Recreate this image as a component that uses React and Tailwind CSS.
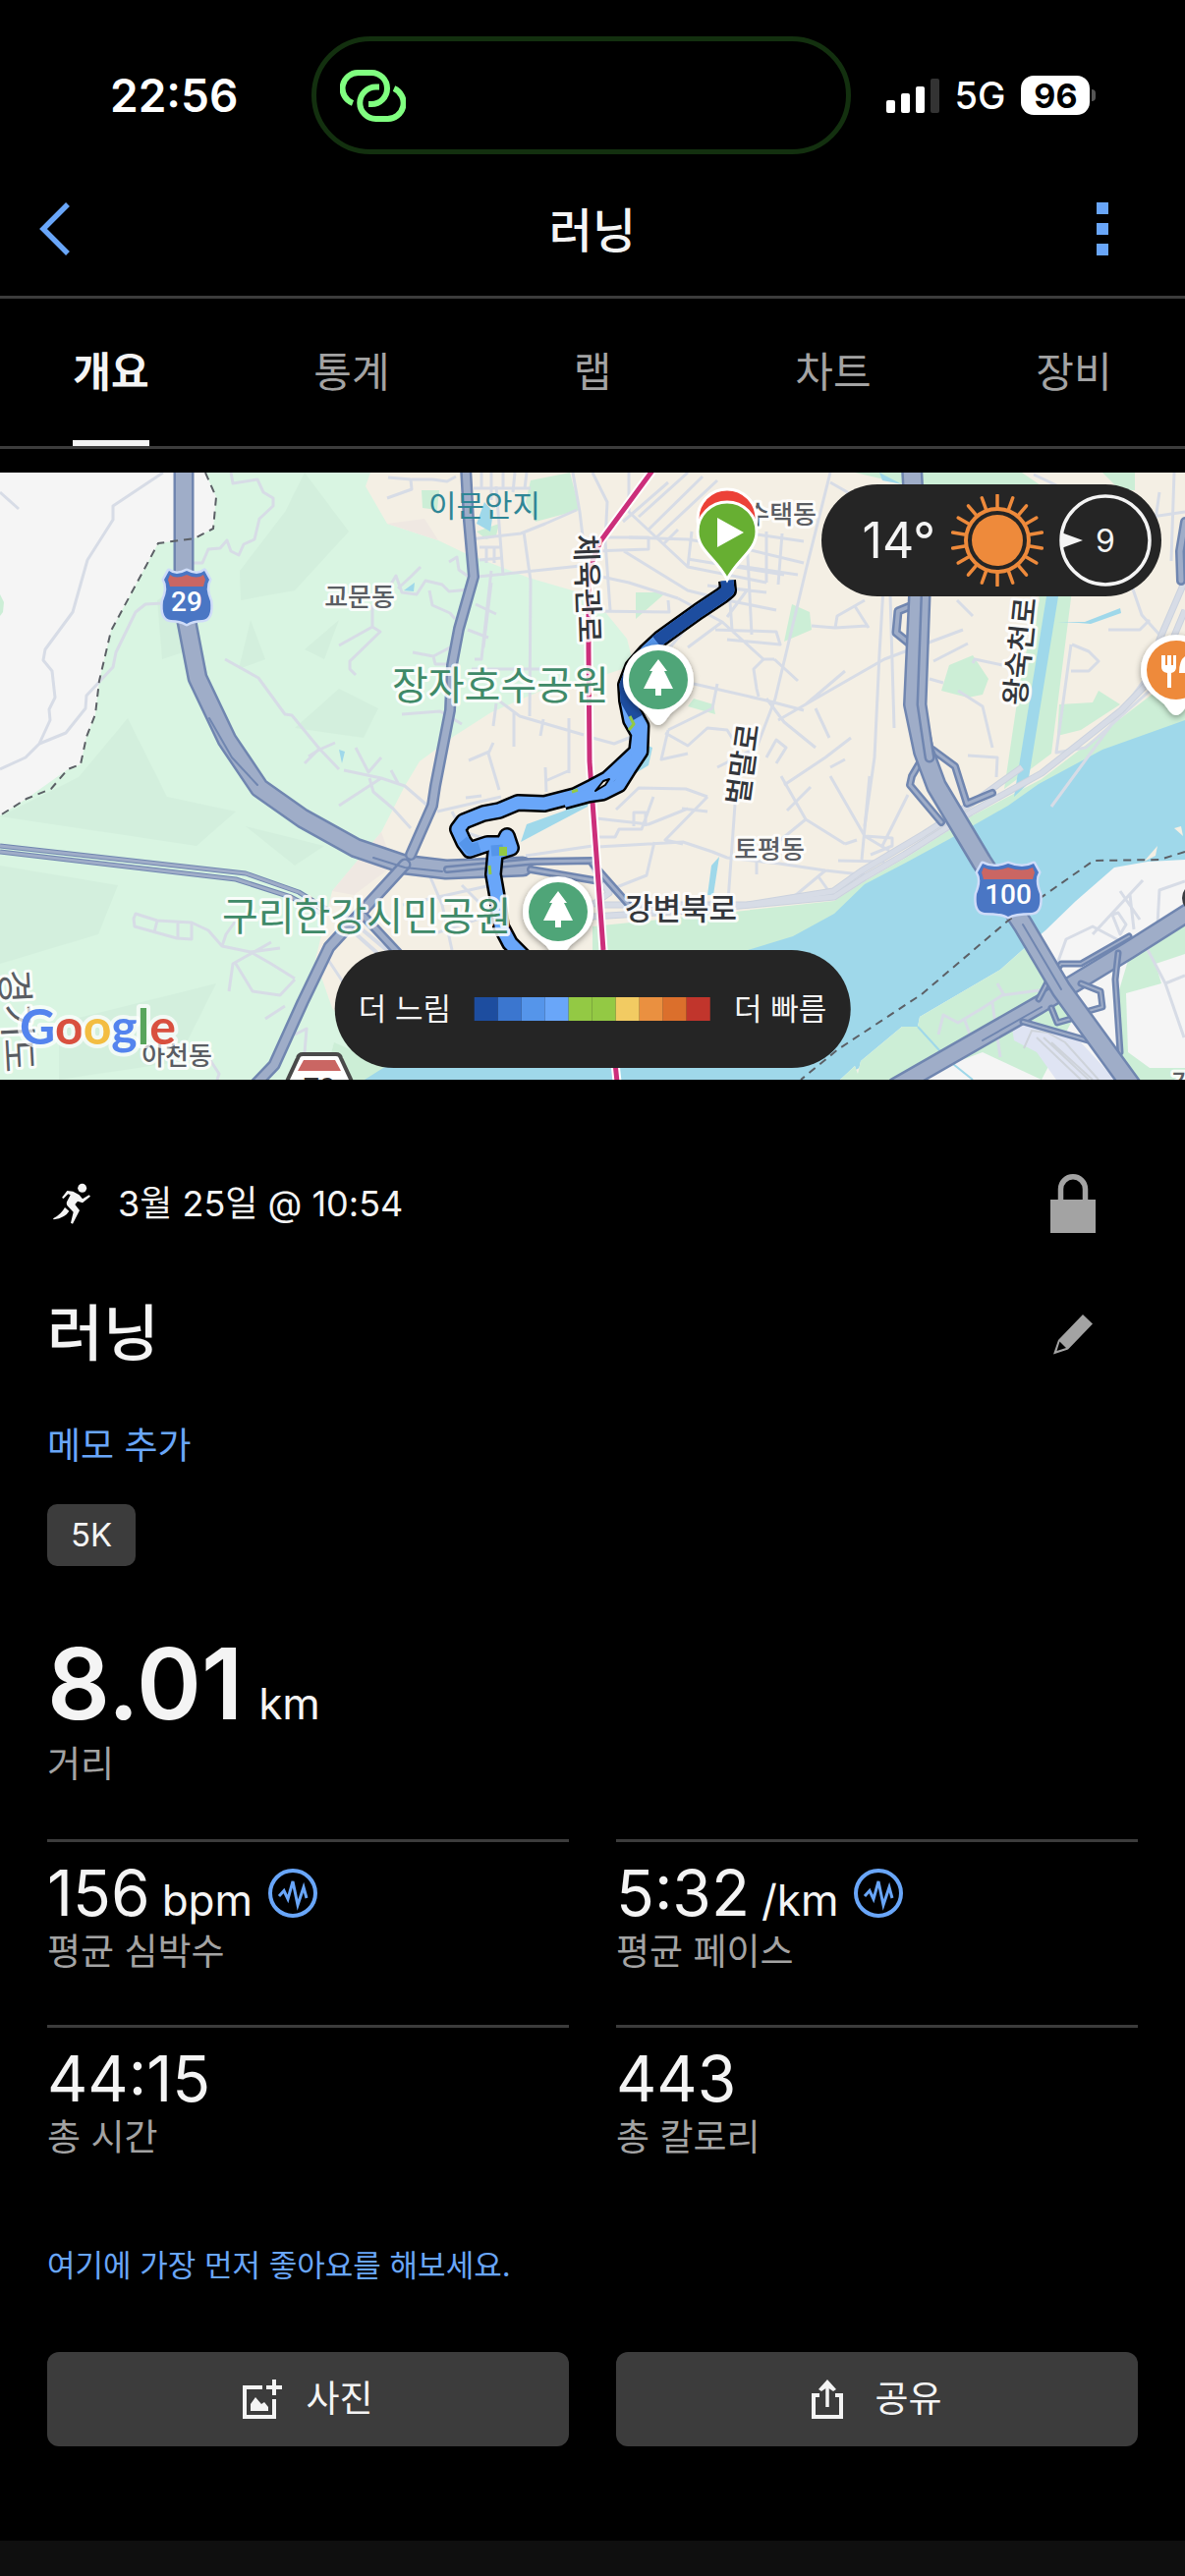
/**
 * ── App.jsx ───────────────────────────────────────────────────────────────
 * Activity overview screen: status bar, tabs, route map and summary stats.
 */

const TABS = ['개요', '통계', '랩', '차트', '장비']

const PACE_COLORS = [
  'bg-[#1d4d9f]',
  'bg-[#3b76cf]',
  'bg-[#5595ea]',
  'bg-[#69a6f9]',
  'bg-[#93c944]',
  'bg-[#93c944]',
  'bg-[#f2cb62]',
  'bg-[#ea9040]',
  'bg-[#db6f2c]',
  'bg-[#c1352c]',
]

const STATS = [
  { label: '평균 심박수', value: '156', unit: 'bpm', badge: true },
  { label: '평균 페이스', value: '5:32', unit: '/km', badge: true },
  { label: '총 시간', value: '44:15' },
  { label: '총 칼로리', value: '443' },
]

/* ── Map geometry ──────────────────────────────────────────────────────── */

const MINOR_ROADS = [
  // west hills
  'M166 0 L115 34 L115 48 L89 89 L74 142 L46 180 L44 191 L53 202 L56 229 L50 241 L51 252 L40 276 L26 290 L0 302',
  'M40 276 L67 265 L87 240 L88 227 L115 198 L118 183 L138 142 L148 134 L165 133',
  'M0 20 L19 37',
  'M235 0 L237 11 L262 7 L268 20 L278 26 L278 34 L264 47 L259 68 L248 73 L243 84 L235 80 L231 69 L224 77 L212 78 L206 92 L197 92',
  'M229 190 L263 209 L290 246 L297 247 L325 281 L345 302 M325 281 L310 296 M341 275 L325 282 L314 289 M362 280 L375 305 L388 290 M398 303 L405 316',
  'M350 303 L388 311 L412 319 L434 338 M388 311 L345 339 M376 311 L380 325 L400 342 L418 362',
  'M379 135 L379 157 L345 176 M379 157 L387 162 L356 192 L356 200 L362 206',
  'M394 120 L403 105 L409 122 L424 124 L433 110 L450 114 L457 121 L478 119 M405 118 L418 106 L428 96',
  'M457 91 L465 86 L467 99 L477 106 M437 120 L440 135 L458 143 L463 149',
  'M420 183 L441 187 L443 195 L455 195 M441 187 L458 178 M409 246 L448 243 L470 256',
  'M136 454 L137 462 L180 474 L195 475 L195 458 L160 456 L138 449 Z M160 456 L157 468 M181 458 L181 474',
  'M195 458 L212 466 L226 482 L255 488 L276 500 L300 515 M226 482 L230 470 L240 456 M255 488 L285 484 M240 500 L257 528 L285 532 L300 516 M233 528 L237 500 L276 478 M270 556 L290 543',
  'M300 572 L312 566 L310 590 M210 592 L223 612 L221 618 M330 490 L350 520',
  // city centre
  'M395 5 L418 7 L419 17 L394 26 M419 7 L440 7 L455 9 L464 4',
  'M482 16 L540 16 M490 0 L490 16 M500 0 L500 28 M512 0 L512 16 M524 0 L522 20 M536 0 L534 16',
  'M478 68 L530 62 L555 52 L587 38 M486 106 L600 94 M505 14 L512 105 M583 0 L590 40 L596 90 M533 60 L540 110 L539 248',
  'M488 89 L511 87 M488 76 L511 76 M495 76 L495 92 M503 76 L503 92 M483 190 L490 190 L500 100 M500 112 L492 178 M476 160 L497 168 M484 134 L505 144 M480 200 L580 200',
  'M505 230 L529 248 L594 267 M523 244 L523 279 M579 250 L579 306 M553 251 L550 268 M505 235 L502 258 M502 275 L497 286 L508 323 M477 293 L498 284 M555 314 L580 303 M555 300 L556 325',
  'M603 0 L618 30 L616 70 L621 140 M603 80 L660 78 L660 66 L603 66 M635 80 L700 120 L740 130 L790 140',
  'M603 104 L640 112 L690 128 M680 130 L681 142 L603 141',
  'M640 0 L640 40 L700 96 L780 112 M650 45 L700 0 M660 58 L715 4 M668 66 L730 8 M676 72 L690 58 M634 50 L680 10 M700 96 L704 60',
  'M640 66 L700 68 L760 78 L818 92 M740 90 L745 160 M760 66 L765 165 M780 60 L780 112 M752 95 L812 104 M750 60 L818 70 M796 62 L792 114 M720 115 L780 122 M700 88 L798 104',
  'M845 0 L820 100 L789 230 L770 280 L730 300 M845 10 L880 30 L905 40',
  'M690 128 L735 152 L777 190 L788 190 M650 215 L710 145 M735 152 L700 178 M728 160 L790 162 L794 175 L740 170 M740 147 L760 120',
  'M706 215 L780 232 L818 242 M730 215 L725 240 L680 262 M777 190 L767 200 L770 220 L772 228',
  'M788 190 L812 212 M826 156 L850 158 L852 146 L880 130 M850 158 L882 156 M870 136 L884 158 M780 230 L798 254 L830 280',
  'M792 252 L865 210 L900 190 L980 160 M820 236 L860 202 M798 318 L840 290 L866 270 M780 290 L790 272 L800 280 L790 296',
  'M900 100 L895 185 L890 290 L880 360 M830 240 L844 270 M845 300 L860 292 M905 90 L910 260',
  'M974 130 L990 146 M950 192 L985 174 M946 210 L960 214 M990 194 L992 190 L1020 196 M975 222 L1000 238 L1010 280 M985 288 L1015 290 L1014 310',
  'M680 262 L673 292 L700 286 M677 265 L700 278 L720 260 L740 262 L748 275 M603 270 L625 276 L650 266',
  'M627 343 L650 321 L698 322 L720 330 M607 352 L660 358 L700 342 M645 360 L645 346 L657 346 L657 360 M603 371 L626 371 L630 363 L653 363 L665 330',
  'M608 381 L695 376 L725 386 L740 392 L793 398 L840 405 L884 410 M666 376 L658 410 L620 425 M720 330 L677 374 L695 378 M720 345 L694 342',
  'M750 310 L740 450 M795 309 L820 353 L860 378 M820 353 L782 384 M845 309 L880 370 L905 385 M885 309 L877 394 M860 378 L872 374 M924 328 L898 380 M880 370 L908 372 L908 380 L886 389 M853 395 L900 396 M770 395 L770 409 M840 405 L810 430 L785 436 M832 410 L842 424 M801 344 L825 320',
  'M1070 340 L1180 190 M1112 470 L1163 415 M1150 430 L1154 465 M1140 426 L1160 455 M1132 450 L1140 470 L1146 460 L1138 448 Z',
  'M1091 175 L1108 182 L1118 192 L1108 202 L1090 202 M1090 175 L1075 285 L1105 280 L1206 190 M1128 160 L1160 160 L1170 150 M1170 90 L1180 20 M1195 0 L1192 90 M1150 110 L1162 145 L1180 165',
  'M1052 2 L1090 20 L1120 14 M1072 60 L1206 40',
  'M1076 500 L1085 475 L1112 462 L1146 480 M1178 460 L1180 425 L1206 416 M1165 480 L1186 520 L1205 575 M1186 520 L1206 512',
  'M955 572 L960 552 L975 560 L1000 545 L1020 532 L1058 527 M1015 520 L1022 532 M981 555 L990 580 M1010 540 L1018 595',
  'M433 400 L450 440 L460 486 M410 440 L500 420 M440 470 L500 450 M470 420 L520 470 M535 390 L603 380 M445 345 L510 330 M474 331 L490 329 M460 345 L470 365 L500 375',
]

const MAIN_ROADS = [
  'M603 452 L700 446 L849 432 L880 412 L920 389 L988 346 L1060 306 L1141 242 L1180 202 L1206 140',
  'M610 440 L760 440 L848 426 L876 406 L940 368 L990 336 L1040 300',
  'M603 440 L620 428 L603 400',
  'M1206 110 L1180 170 L1170 210',
]

const HIGHWAYS = [
  { d: 'M187 -5 V110 L190 152 L201 209 L231 272 L264 321 L308 352 L362 382 L412 399 L454 404 L532 401', w: 21 },
  { d: 'M474 -5 L477 49 L482 106 L467 159 L460 196 L458 242 L443 319 L440 339 L418 389', w: 12 },
  { d: 'M412 399 L369 446 L335 483 L308 539 L279 603 L258 625', w: 13 },
  { d: 'M369 450 L408 492', w: 10 },
  { d: 'M455 404 L540 396 L603 395 M540 404 L610 416 M603 398 L640 440', w: 8 },
  { d: 'M936 132 L914 141 L912 163 L928 176', w: 9 },
  { d: 'M945 280 L928 309 L926 318 L958 356 M949 282 L972 299 L984 337 L1010 326', w: 8 },
  { d: 'M912 625 L1057 542 L1149 486 L1212 446', w: 20 },
  { d: 'M1138 489 L1135 516 L1140 590 M1041 559 L1107 578 M1057 536 L1068 515 L1080 500 L1100 500 L1149 472 M1100 520 L1120 528 L1122 544 L1108 548 M1070 545 L1076 560 L1090 556', w: 7 },
  { d: 'M1206 50 L1201 80 L1202 110', w: 10 },
  { d: 'M928 -5 L935 126 L930 236 L940 284 L953 319 L999 396 L1041 460 L1080 526 L1152 625', w: 22 },
  { d: 'M942 126 L938 236 L946 290', w: 11 },
]

const BORDER_LINES = [
  'M209 0 L220 25 L217 57 L198 67 L161 72 L113 161 L101 212 L97 246 L88 269 L82 297 L69 302 L52 322 L27 332 L0 349',
  'M1206 386 L1180 394 L1113 395 L1026 456 L938 531 L853 587 L815 618',
]

const ROUTE =
  'M740 110 L741 120 L735 125 L711 141 L690 156 L672 169 L658 182 L644 198 L637 216 L638 232 L642 252 L650 266 L648 284 L632 299 L618 312 L603 320 L585 329 L554 337 L527 336 L508 344 L492 347 L472 355 L466 363 L472 376 L478 384 L496 378 L512 378 L516 370 L520 382 L504 387 L502 409 L506 432 L510 462 L519 479 L540 500'

const ROUTE_RETURN = 'M643 240 L653 258 L652 284 L640 302 L630 318 L614 326 L600 328 L574 335'

/* ── Icons ─────────────────────────────────────────────────────────────── */

function LinkIcon() {
  return (
    <svg width="67" height="53" viewBox="0 0 67 53" fill="none" stroke="#80ff80" strokeWidth="6" aria-hidden="true">
      <path d="M13 34 A16 16 0 0 1 19 3 H32 A16 16 0 0 1 32 35 H29" />
      <path d="M40 17.500 H36.500 A16.200 16.200 0 0 0 36.500 50 H48 A16.200 16.200 0 0 0 55 19" />
    </svg>
  )
}

function SignalIcon() {
  return (
    <svg width="54" height="35" viewBox="0 0 54 35" fill="#fff" aria-hidden="true">
      <rect x="0" y="22" width="9" height="13" rx="2" />
      <rect x="15" y="15" width="9" height="20" rx="2" />
      <rect x="30" y="8" width="9" height="27" rx="2" />
      <rect x="45" y="0" width="9" height="35" rx="2" fill="#333" />
    </svg>
  )
}

function RunnerIcon() {
  return (
    <svg width="70" height="70" viewBox="0 0 210 210" fill="#f4f4f4" className="-ml-2" aria-hidden="true">
      <circle cx="131" cy="58" r="13.500" />
      <path d="M69 87 L85 66 L103 68 L122 79 L132 91 L152 79 L156 83 L132 103 L117 98 L109 108 L123 126 L102 167 L96 164 L104 131 L87 113 Q80 106 86 96 L95 79 L88 76 L74 90 Z" />
      <path d="M78 117 L91 128 Q80 148 44 154 L42 151 Q66 139 78 117 Z" />
    </svg>
  )
}

function LockIcon() {
  return (
    <svg width="46" height="60" viewBox="0 0 46 60" aria-hidden="true">
      <path d="M10.500 28 V15.300 a12.500 12.500 0 0 1 25 0 V28" fill="none" stroke="#a3a3a3" strokeWidth="5.500" />
      <rect y="26" width="46" height="34" fill="#a3a3a3" />
    </svg>
  )
}

function PencilIcon() {
  return (
    <svg width="40" height="41" viewBox="0 0 40 41" fill="#a3a3a3" fillRule="evenodd" aria-hidden="true">
      <path d="M30 0 L40 9.500 L15 35.500 L0 40.500 L5 26 Z M6.500 27.500 L13 34 L3.500 37 Z" />
    </svg>
  )
}

function PulseIcon() {
  return (
    <svg width="50" height="50" viewBox="0 0 50 50" fill="none" stroke="#69a6f9" aria-hidden="true">
      <circle cx="25" cy="25" r="23" strokeWidth="4" />
      <path d="M11 28 L16 22.500 L20 31 L25 13 L30 37 L36 19 L39 30" strokeWidth="3" />
    </svg>
  )
}

function AddPhotoIcon() {
  return (
    <svg width="40" height="40" viewBox="0 0 40 40" fill="none" stroke="#f4f4f4" strokeWidth="4" aria-hidden="true">
      <path d="M20 8 H2 V38 H32 V20 M24 8 H40 M32 0 V16" />
      <path d="M8 32 V25 L13 18 L19 25 L22 23 L26 28 V32 Z" fill="#f4f4f4" stroke="none" />
    </svg>
  )
}

function ShareIcon() {
  return (
    <svg width="32" height="40" viewBox="0 0 32 40" fill="none" stroke="#f4f4f4" strokeWidth="4" aria-hidden="true">
      <path d="M8 16 H2 V38 H30 V16 H24" />
      <path d="M16 28 V6" strokeWidth="3.500" />
      <path d="M16 0 L25 10 L22 12 L16 8 L10 12 L7 10 Z" fill="#f4f4f4" stroke="none" />
    </svg>
  )
}

function SunIcon() {
  const rays = Array.from({ length: 18 }, (_, i) => i * 20)
  return (
    <svg width="94" height="94" viewBox="-47 -47 94 94" fill="none" stroke="#ee8a3b" aria-hidden="true">
      <circle r="26" fill="#ee8a3b" stroke="none" />
      <circle r="32" strokeWidth="4" />
      {rays.map((deg) => (
        <path key={deg} d="M0 -34 V-46" strokeWidth="3.500" strokeLinecap="round" transform={`rotate(${deg})`} />
      ))}
    </svg>
  )
}

/* ── Map ───────────────────────────────────────────────────────────────── */

function Label({ x, y, size = 26, color = '#5a5d63', weight = 500, angle = 0, anchor = 'middle', children }) {
  return (
    <text
      transform={`translate(${x} ${y}) rotate(${angle})`}
      dy="0.36em"
      textAnchor={anchor}
      fontSize={size}
      fontWeight={weight}
      fill={color}
      stroke="#fff"
      strokeOpacity="0.85"
      strokeWidth="6"
      strokeLinejoin="round"
      paintOrder="stroke"
    >
      {children}
    </text>
  )
}

function PlacePin({ x, y, color, children }) {
  return (
    <g transform={`translate(${x} ${y})`}>
      <path
        d="M0 46 C-5 46 -8 40 -12 35 C-20 27 -36 20 -36 0 A36 36 0 0 1 36 0 C36 20 20 27 12 35 C8 40 5 46 0 46 Z"
        fill="#fff"
        filter="url(#pinShadow)"
      />
      <circle r="30" fill={color} />
      {children}
    </g>
  )
}

function Tree() {
  return <path d="M0 -21 L9 -9 H6 L15 9 H3 V16 H-3 V9 H-15 L-6 -9 H-9 Z" fill="#fff" />
}

function Shield({ x, y, half, children }) {
  const a = half
  const b = half - 4
  return (
    <g transform={`translate(${x} ${y})`}>
      <path
        d={`M${-b + 4} -27 Q${-b / 2} -21 0 -27 Q${b / 2} -21 ${b - 4} -27 L${b + 1} -18 Q${b - 4} -10 ${a - 2} 4 Q${a} 22 ${a - 10} 23 Q6 23 0 27 Q-6 23 ${-a + 10} 23 Q${-a} 22 ${-a + 2} 4 Q${-b + 4} -10 ${-b - 1} -18 Z`}
        fill="#4a76c4"
        stroke="#cfdcf8"
        strokeWidth="5"
        paintOrder="stroke"
        strokeLinejoin="round"
      />
      <path
        d={`M${-b + 5} -23 Q${-b / 2} -18 0 -23 Q${b / 2} -18 ${b - 5} -23 L${b - 3} -18 L${b - 5} -11 H${-b + 5} L${-b + 3} -18 Z`}
        fill="#ca6663"
      />
      <text y="14" textAnchor="middle" fontSize="28" fontWeight="500" fill="#fff" className="font-['Roboto',sans-serif]">
        {children}
      </text>
    </g>
  )
}

function RouteMap() {
  return (
    <svg
      viewBox="0 0 1206 618"
      preserveAspectRatio="xMidYMid slice"
      className="block w-full"
      role="img"
      aria-label="러닝 경로 지도"
    >
      <defs>
        <filter id="pinShadow" x="-30%" y="-30%" width="160%" height="160%">
          <feDropShadow dx="0" dy="2" stdDeviation="3" floodOpacity="0.4" />
        </filter>
      </defs>

      {/* Land */}
      <rect width="1206" height="618" fill="#d9f5e2" />
      <g fill="#d3efdd">
        <path d="M310 0 L355 60 L300 120 L245 130 L244 100 L290 40 Z" />
        <path d="M165 190 L195 180 L190 110 L160 130 Z M243 200 L255 150 L270 190 Z M310 180 L345 150 L330 190 Z" />
        <path d="M300 260 L345 220 L385 240 L370 270 Z M0 350 L80 310 L130 250 L170 330 L240 345 L200 380 Z" />
        <path d="M0 400 L120 420 L100 470 L0 500 Z M60 560 L220 520 L180 600 L60 618 Z M250 360 L330 380 L300 400 Z" />
      </g>
      <path d="M0 0 H209 L220 25 L217 57 L198 67 L161 72 L113 161 L101 212 L97 246 L88 269 L82 297 L69 302 L27 332 L0 349 Z" fill="#f5f5f5" />
      <path d="M0 124 L4 132 L3 142 L0 146 Z" fill="#cceed6" />
      <path
        d="M377 0 L372 14 L394 52 L446 69 L473 82 L538 107 L603 126 L638 169 L645 196 L603 210 L560 218 L500 244 L461 269 L427 294 L412 319 L388 366 L338 426 L321 496 L338 545 L400 618 L1206 618 V0 Z"
        fill="#f4efe4"
      />
      <path d="M394 52 L432 47 L446 69 Z M388 366 L338 426 L360 430 L400 400 Z" fill="#efe8e2" />

      {/* Parks */}
      <g fill="#cceed6">
        <path d="M540 8 L580 0 L590 38 L545 50 L535 30 Z M429 18 L447 18 L445 38 L430 36 Z M485 60 L508 52 L505 64 L495 68 Z" />
        <path d="M647 122 L678 122 L647 149 Z M806 134 L824 142 L826 160 L798 172 Z M966 196 L990 186 L1006 210 L1000 226 L985 229 L958 222 Z" />
        <path d="M870 0 H1040 L1062 15 L1052 120 H1091 L1070 286 L1022 322 L1040 200 L1058 130 L1040 20 L930 14 Z" />
        <path d="M1078 236 L1112 234 L1118 222 L1140 236 L1100 262 L1076 268 Z M1122 0 H1155 L1155 18 L1140 18 Z" />
        <path d="M603 462 L700 452 L849 436 L880 416 L922 392 L988 350 L1060 312 L1206 200 V260 L1000 400 L761 500 L500 618 H330 L400 540 L603 486 Z" />
      </g>
      <path d="M700 238 L728 246 L726 236 L706 230 Z" fill="#cceed6" />

      {/* Water */}
      <g fill="#9fd8ea">
        <path d="M1206 252 L1122 282 L1057 317 L1026 339 L968 372 L922 397 L880 419 L849 449 L807 472 L761 486 L603 530 L390 606 L371 618 H855 L1206 400 Z" />
        <path d="M1066 120 H1078 L1046 317 L1032 330 Z M1076 152 L1104 152 L1140 138 L1141 143 L1110 154 L1098 153 Z" />
        <path d="M655 276 L664 280 L660 298 L640 310 L636 306 L650 290 Z M603 322 L598 340 L560 360 L530 376 L536 358 L575 344 Z" />
        <path d="M493 30 L502 40 L499 60 L485 52 Z M411 120 L422 112 L421 121 Z M345 282 L351 284 L348 296 Z M732 391 L726 430 L720 430 L724 400 Z" />
        <path d="M895 0 L918 12 L898 8 Z" />
      </g>
      <path d="M330 618 L340 580 L385 600 L360 618 Z" fill="#cceed6" />

      {/* South bank */}
      <path d="M1206 394 L1168 396 L1134 402 L1095 436 L1064 466 L1045 482 L1018 506 L936 554 L934 564 L918 564 L876 599 L873 612 L870 604 L855 618 H1206 Z" fill="#f5f5f5" />
      <path d="M1045 482 L1018 506 L936 554 L934 564 L918 564 L876 599 L873 612 L870 604 L855 618 H925 L1000 590 L1060 618 L1090 560 L1075 500 Z" fill="#cceed6" />
      <path d="M1206 450 L1150 490 L1138 530 L1142 618 H1206 L1206 606 L1170 606 L1148 590 L1146 530 L1182 520 L1176 500 L1206 490 Z" fill="#cceed6" />
      <path d="M1029 560 L1052 558 L1100 580 L1135 618 H1075 L1055 590 L1032 578 Z" fill="#dfe4f3" />
      <path d="M1055 575 L1100 618 M1062 575 L1108 618 M1042 586 L1050 568 L1066 570 L1084 580 L1118 618 M1070 580 L1112 618" stroke="#ced3da" strokeWidth="2" fill="none" />
      <path d="M1164 396 L1178 380 L1176 390 Z M1195 362 L1202 360 L1204 370 Z" fill="#f4efe4" />
      <path d="M934 564 L965 598 L990 618" stroke="#9fd8ea" strokeWidth="2" fill="none" />

      {/* Roads */}
      <g fill="none" stroke="#d7dce6" strokeWidth="3" strokeLinejoin="round">
        {MINOR_ROADS.map((d) => <path key={d} d={d} />)}
      </g>
      <g fill="none" strokeLinejoin="round">
        {MAIN_ROADS.map((d) => <path key={d} d={d} stroke="#cbd2de" strokeWidth="7" />)}
        {MAIN_ROADS.map((d) => <path key={d} d={d} stroke="#d7dce6" strokeWidth="5" />)}
      </g>
      <g fill="none" strokeLinejoin="round">
        <path d="M0 380 L250 408 L304 427 L335 446 M0 386 L240 414 L296 432 L326 448" stroke="#7086b0" strokeWidth="5" />
        <path d="M0 380 L250 408 L304 427 L335 446 M0 386 L240 414 L296 432 L326 448" stroke="#9fadc8" strokeWidth="3" />
        <path d="M340 450 L385 490 M348 448 L396 488" stroke="#d7dce6" strokeWidth="4" />
      </g>
      <g fill="none" strokeLinejoin="round" strokeLinecap="round">
        {HIGHWAYS.map((h) => (
          <g key={h.d}>
            <path d={h.d} stroke="#7086b0" strokeWidth={h.w} />
            <path d={h.d} stroke="#9fadc8" strokeWidth={h.w - 5} />
          </g>
        ))}
        <path d="M213 250 L236 290 L262 318 M380 392 L412 402 L450 406 M1041 460 L1080 526 M1000 578 L1060 544" stroke="#7086b0" strokeWidth="2" />
      </g>
      <g fill="none" stroke="#5c6066" strokeWidth="2" strokeDasharray="8 6">
        {BORDER_LINES.map((d) => <path key={d} d={d} />)}
      </g>

      {/* Subway line */}
      <path d="M664 -2 L611 70 L599 100 V180 L600 294 L614 486 L628 620" fill="none" stroke="#fff" strokeWidth="9" />
      <path d="M664 -2 L611 70 L599 100 V180 L600 294 L614 486 L628 620" fill="none" stroke="#cc2f7b" strokeWidth="5" />

      {/* Recorded track */}
      <g fill="none" strokeLinejoin="round">
        <path d={ROUTE} stroke="#000" strokeWidth="18" />
        <path d={ROUTE_RETURN} stroke="#000" strokeWidth="17" />
        <path d={ROUTE} stroke="#69a6f9" strokeWidth="13" />
        <path d={ROUTE_RETURN} stroke="#69a6f9" strokeWidth="12" />
        <path d="M740 110 L741 120 L735 125 L711 141 L690 156 L668 172 M644 198 L637 216 L638 232 L648 250" stroke="#1d4d9f" strokeWidth="13" />
        <path d="M668 172 L656 184 M471 374 L479 384 L488 381 M500 385 L512 384" stroke="#5595ea" strokeWidth="11" />
        <path d="M641 248 L645 256 L640 262 M582 325 L588 323 M498 400 L499 409" stroke="#93c944" strokeWidth="3" />
        <rect x="508" y="381" width="8" height="9" fill="#93c944" />
        <path d="M606 324 L614 314 L620 312 L616 318 Z" fill="#f4efe4" stroke="#000" strokeWidth="2" />
      </g>

      {/* Labels */}
      <g className="font-['Noto_Sans_CJK_KR',sans-serif]">
        <text x="493" y="45" textAnchor="middle" fontSize="31" fill="#2f8696">이문안지</text>
        <Label x={366} y={127}>교문동</Label>
        <Label x={399} y={217} size={40} weight={400} color="#3f8a68" anchor="start">장자호수공원</Label>
        <Label x={598} y={118} size={30} color="#33363b" angle={88}>체육관로</Label>
        <Label x={831} y={43} anchor="end">수택동</Label>
        <Label x={1038} y={182} size={30} color="#33363b" angle={-84}>왕숙천로</Label>
        <Label x={756} y={297} size={30} color="#33363b" angle={-82}>벌말로</Label>
        <Label x={783} y={384}>토평동</Label>
        <Label x={693} y={444} size={31} color="#33363b">강변북로</Label>
        <Label x={226} y={452} size={40} weight={400} color="#3f8a68" anchor="start">구리한강시민공원</Label>
        <Label x={180} y={594}>아천동</Label>
        <Label x={17} y={558} size={38} weight={400} angle={87}>경기도</Label>
        <Label x={1192} y={622} anchor="start">강</Label>
      </g>
      <circle cx="1218" cy="433" r="15" fill="#3a3d42" />

      <Shield x={190} y={127} half={26}>29</Shield>
      <Shield x={1026} y={425} half={34}>100</Shield>
      <g>
        <path d="M290 624 L303 596 Q304 592 308 592 H342 Q346 592 347 596 L360 624 Z" fill="#fff" stroke="#4a4a4a" strokeWidth="4" />
        <path d="M309 598 H341 L347 609 H303 Z" fill="#ca6663" />
        <text x="325" y="636" textAnchor="middle" fontSize="28" fontWeight="700" fill="#333" className="font-['Roboto',sans-serif]">70</text>
      </g>

      {/* Pins */}
      <PlacePin x={670} y={211} color="#4fa578"><Tree /></PlacePin>
      <PlacePin x={568} y={447} color="#4fa578"><Tree /></PlacePin>
      <PlacePin x={1197} y={201} color="#ee8a3b">
        <path d="M-15 -15 V-3 Q-15 2 -9 3 V18 H-5 V3 Q0 2 0 -3 V-15 H-3 V-5 H-5 V-15 H-9 V-5 H-11 V-15 Z M9 -14 Q3 -10 3 3 H9 V18 H13 V-15 Z" fill="#fff" />
      </PlacePin>
      <g stroke="#fff" strokeWidth="3">
        <path d="M740 97 C730 76 710 66 710 47 A30 30 0 0 1 770 47 C770 66 750 76 740 97 Z" fill="#ec4138" />
        <path d="M740 109 C730 88 710 80 710 60 A30 30 0 0 1 770 60 C770 80 750 88 740 109 Z" fill="#67af32" />
        <path d="M730 46 L757 61 L730 76 Z" fill="#fff" stroke="none" />
      </g>

      {/* Attribution */}
      <text
        x="20"
        y="582"
        fontSize="50"
        fontWeight="700"
        stroke="#fff"
        strokeOpacity="0.7"
        strokeWidth="8"
        strokeLinejoin="round"
        paintOrder="stroke"
        className="font-['Lato',sans-serif]"
      >
        <tspan fill="#5484ee">G</tspan>
        <tspan fill="#d9503f">o</tspan>
        <tspan fill="#f3bd42">o</tspan>
        <tspan fill="#5484ee">g</tspan>
        <tspan fill="#58a55c">l</tspan>
        <tspan fill="#d9503f">e</tspan>
      </text>
    </svg>
  )
}

/* ── Sections ──────────────────────────────────────────────────────────── */

function StatusBar() {
  return (
    <div className="grid grid-cols-[1fr_549px_1fr] items-center pt-[37px] pr-6 pb-2">
      <span className="pl-28 text-[46px] leading-12 font-semibold text-white">22:56</span>
      <div className="flex h-[120px] items-center rounded-full border-[5px] border-[#13300f] pl-6">
        <LinkIcon />
      </div>
      <div className="-mr-6 flex items-center gap-4 pl-9">
        <SignalIcon />
        <span className="text-[38px] leading-10 font-medium text-white">5G</span>
        <span className="flex items-center gap-[2px]">
          <span className="flex h-10 w-[70px] items-center justify-center rounded-[13px] bg-white text-[34px] font-bold text-black">
            96
          </span>
          <span className="h-3 w-1 rounded-r-full bg-[#555]" />
        </span>
      </div>
    </div>
  )
}

function NavBar() {
  return (
    <header className="flex h-[139px] items-center justify-between border-b-[3px] border-[#3c3c3c] px-10">
      <button type="button" aria-label="뒤로" className="flex w-16">
        <svg width="32" height="54" viewBox="0 0 32 54" fill="none" stroke="#69a6f9" strokeWidth="5.500" aria-hidden="true">
          <path d="M29 2 L4 27 L29 52" />
        </svg>
      </button>
      <h1 className="pt-1 text-5xl font-medium">러닝</h1>
      <button type="button" aria-label="더 보기" className="flex w-16 justify-end pr-[38px]">
        <svg width="12" height="54" viewBox="0 0 12 54" fill="#69a6f9" aria-hidden="true">
          <path d="M0 0 H12 V12 H0 Z M0 21 H12 V33 H0 Z M0 42 H12 V54 H0 Z" />
        </svg>
      </button>
    </header>
  )
}

function Tabs() {
  return (
    <nav className="flex h-[153px] justify-between border-b-[3px] border-[#3c3c3c] px-[54px]">
      {TABS.map((tab, i) => (
        <button key={tab} type="button" className="flex w-[118px] justify-center text-[42px]">
          <span
            className={
              i === 0
                ? 'flex h-full items-center border-b-[6px] border-[#f4f4f4] pt-1 font-bold text-[#f4f4f4]'
                : 'flex h-full items-center border-b-[6px] border-transparent pt-1 text-[#a3a3a3]'
            }
          >
            {tab}
          </span>
        </button>
      ))}
    </nav>
  )
}

function Weather() {
  return (
    <div className="absolute top-3 right-6 flex h-[114px] items-center gap-4 rounded-full bg-[#252525] pr-[10px] pl-[42px]">
      <span className="text-[50px]">14°</span>
      <SunIcon />
      <svg width="94" height="94" viewBox="-47 -47 94 94" aria-label="풍속 9">
        <circle r="45" fill="none" stroke="#f4f4f4" strokeWidth="3.500" />
        <path d="M-45 -8 L-23 0 L-45 8 Z" fill="#f4f4f4" />
        <text y="12" textAnchor="middle" fontSize="32" fill="#f4f4f4">9</text>
      </svg>
    </div>
  )
}

function PaceLegend() {
  return (
    <div className="absolute bottom-3 left-1/2 flex h-[120px] -translate-x-1/2 items-center gap-6 rounded-full bg-[#252525] px-6 text-[31px] whitespace-nowrap">
      <span>더 느림</span>
      <span className="flex">
        {PACE_COLORS.map((color, i) => (
          <span key={i} className={`h-6 w-6 ${color}`} />
        ))}
      </span>
      <span>더 빠름</span>
    </div>
  )
}

function Stat({ label, value, unit, badge }) {
  return (
    <div className="border-t-[3px] border-[#3c3c3c] pt-5 pb-[50px]">
      <div className="flex h-16 items-center gap-4">
        <p className="text-[64px] leading-16">
          {value}
          {unit && <span className="ml-3 text-[44px] leading-none">{unit}</span>}
        </p>
        {badge && <PulseIcon />}
      </div>
      <p className="mt-1 text-[37px] leading-12 text-[#a3a3a3]">{label}</p>
    </div>
  )
}

export default function App() {
  return (
    <div className="flex min-h-screen flex-col bg-black font-['Inter','Noto_Sans_CJK_KR',sans-serif] text-[#f4f4f4]">
      <StatusBar />
      <NavBar />
      <Tabs />

      <div className="relative mt-6 overflow-hidden">
        <RouteMap />
        <Weather />
        <PaceLegend />
      </div>

      <main className="px-12 pt-24 pb-24">
        <div className="flex h-[60px] items-center justify-between">
          <p className="flex items-center gap-[10px] text-4xl">
            <RunnerIcon />
            3월 25일 @ 10:54
          </p>
          <button type="button" aria-label="공개 설정" className="flex w-[132px] justify-center">
            <LockIcon />
          </button>
        </div>

        <div className="mt-[73px] flex h-[60px] items-center justify-between">
          <h2 className="text-[62px] leading-[60px] font-medium">러닝</h2>
          <button type="button" aria-label="제목 편집" className="flex w-[132px] justify-center">
            <PencilIcon />
          </button>
        </div>

        <button type="button" className="mt-[60px] block text-[37px] leading-12 text-[#69a6f9]">
          메모 추가
        </button>

        <span className="mt-[35px] flex h-[63px] w-fit items-center rounded-[10px] bg-[#3c3c3c] px-6 text-[33px]">5K</span>

        <p className="mt-[70px] text-[100px] leading-[100px] font-semibold">
          8.01
          <span className="ml-4 text-[44px] leading-none font-normal">km</span>
        </p>
        <p className="mt-2 mb-[52px] text-[37px] leading-12 text-[#a3a3a3]">거리</p>

        <div className="grid grid-cols-2 gap-x-12">
          {STATS.map((s) => <Stat key={s.label} {...s} />)}
        </div>

        <a href="#likes" className="mt-8 block text-[31px] leading-12 text-[#69a6f9]">
          여기에 가장 먼저 좋아요를 해보세요.
        </a>

        <div className="mt-16 grid grid-cols-2 gap-12 text-[37px]">
          <button type="button" className="flex h-24 items-center justify-center gap-6 rounded-xl bg-[#3c3c3c]">
            <AddPhotoIcon />
            사진
          </button>
          <button type="button" className="flex h-24 items-center justify-center gap-8 rounded-xl bg-[#3c3c3c]">
            <ShareIcon />
            공유
          </button>
        </div>
      </main>

      <div className="min-h-9 grow bg-[#0f0f0f]" />
    </div>
  )
}
